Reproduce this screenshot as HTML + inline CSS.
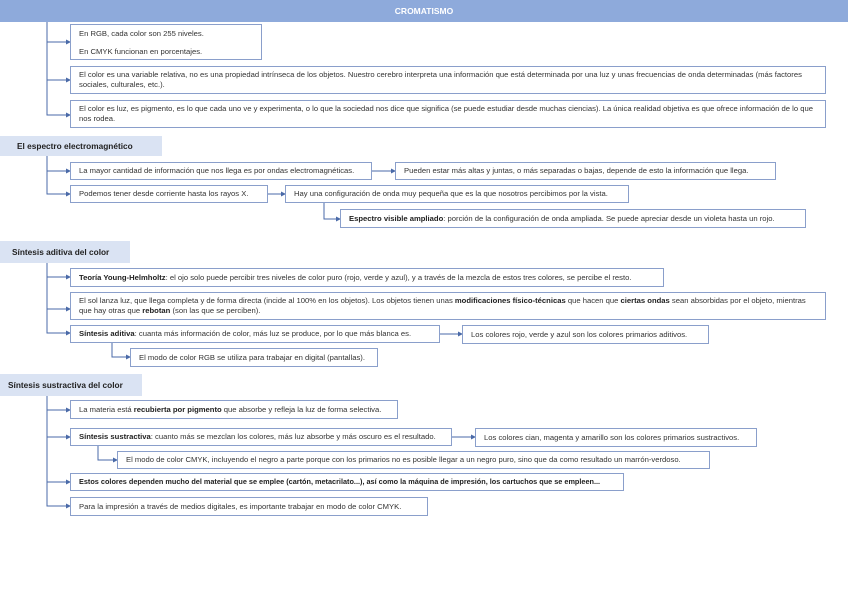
<!DOCTYPE html>
<html><head><meta charset="utf-8"><style>
body{margin:0;width:848px;height:599px;background:#fff;position:relative;overflow:hidden;font-family:"Liberation Sans",sans-serif;color:#333}
.hd{position:absolute;left:0;top:0;width:848px;height:22px;background:#8eaadb;color:#fff;font-weight:bold;font-size:8.5px;text-align:center;line-height:22px}
.b{position:absolute;border:1px solid #8a9fcb;box-sizing:border-box;font-size:7.65px;line-height:10px;padding:0 0 0 8px;background:#fff;letter-spacing:0;display:flex;align-items:center;white-space:nowrap}
.b.w{white-space:normal;padding-right:6px}
.l{position:absolute;left:0;background:#dae3f3;font-weight:bold;font-size:8.3px;color:#222;display:flex;align-items:center}
svg{position:absolute;left:0;top:0}
b{color:#222}
</style></head><body>
<div class="hd">CROMATISMO</div>
<svg width="848" height="599" stroke="#4a6aa8" fill="#4a6aa8" stroke-width="1">
<g fill="none">
<path d="M47 22V115H68M47 42H68M47 80H68"/>
<path d="M47 156V194H68M47 171H68M372 171H393M268 194H283M324 203V219H338"/>
<path d="M47 263V333H68M47 277H68M47 309H68M440 334H460M112 343V357H128"/>
<path d="M47 396V506H68M47 410H68M47 437H68M47 482H68M452 437H473M98 446V460H115"/>
</g>
<g stroke="none">
<path d="M66 39.5L71 42L66 44.5Z"/><path d="M66 77.5L71 80L66 82.5Z"/><path d="M66 112.5L71 115L66 117.5Z"/>
<path d="M66 168.5L71 171L66 173.5Z"/><path d="M66 191.5L71 194L66 196.5Z"/><path d="M391 168.5L396 171L391 173.5Z"/><path d="M281 191.5L286 194L281 196.5Z"/><path d="M336 216.5L341 219L336 221.5Z"/>
<path d="M66 274.5L71 277L66 279.5Z"/><path d="M66 306.5L71 309L66 311.5Z"/><path d="M66 330.5L71 333L66 335.5Z"/><path d="M458 331.5L463 334L458 336.5Z"/><path d="M126 354.5L131 357L126 359.5Z"/>
<path d="M66 407.5L71 410L66 412.5Z"/><path d="M66 434.5L71 437L66 439.5Z"/><path d="M66 479.5L71 482L66 484.5Z"/><path d="M66 503.5L71 506L66 508.5Z"/><path d="M471 434.5L476 437L471 439.5Z"/><path d="M113 457.5L118 460L113 462.5Z"/>
</g>
</svg>
<div class="b" style="left:70px;top:24px;width:192px;height:36px;display:block;padding-top:4px">En RGB, cada color son 255 niveles.<br><div style="margin-top:8px">En CMYK funcionan en porcentajes.</div></div>
<div class="b w" style="left:70px;top:66px;width:756px;height:28px">El color es una variable relativa, no es una propiedad intrínseca de los objetos. Nuestro cerebro interpreta una información que está determinada por una luz y unas frecuencias de onda determinadas (más factores sociales, culturales, etc.).</div>
<div class="b w" style="left:70px;top:100px;width:756px;height:28px">El color es luz, es pigmento, es lo que cada uno ve y experimenta, o lo que la sociedad nos dice que significa (se puede estudiar desde muchas ciencias). La única realidad objetiva es que ofrece información de lo que nos rodea.</div>

<div class="l" style="top:136px;width:162px;height:20px;padding-left:17px;box-sizing:border-box">El espectro electromagnético</div>
<div class="b" style="left:70px;top:162px;width:302px;height:18px">La mayor cantidad de información que nos llega es por ondas electromagnéticas.</div>
<div class="b" style="left:395px;top:162px;width:381px;height:18px">Pueden estar más altas y juntas, o más separadas o bajas, depende de esto la información que llega.</div>
<div class="b" style="left:70px;top:185px;width:198px;height:18px">Podemos tener desde corriente hasta los rayos X.</div>
<div class="b" style="left:285px;top:185px;width:344px;height:18px">Hay una configuración de onda muy pequeña que es la que nosotros percibimos por la vista.</div>
<div class="b" style="left:340px;top:209px;width:466px;height:19px"><b>Espectro visible ampliado</b>: porción de la configuración de onda ampliada. Se puede apreciar desde un violeta hasta un rojo.</div>

<div class="l" style="top:241px;width:130px;height:22px;padding-left:12px;box-sizing:border-box">Síntesis aditiva del color</div>
<div class="b" style="left:70px;top:268px;width:594px;height:19px"><b>Teoría Young-Helmholtz</b>: el ojo solo puede percibir tres niveles de color puro (rojo, verde y azul), y a través de la mezcla de estos tres colores, se percibe el resto.</div>
<div class="b w" style="left:70px;top:292px;width:756px;height:28px"><span>El sol lanza luz, que llega completa y de forma directa (incide al 100% en los objetos). Los objetos tienen unas <b>modificaciones físico-técnicas</b> que hacen que <b>ciertas ondas</b> sean absorbidas por el objeto, mientras que hay otras que <b>rebotan</b> (son las que se perciben).</span></div>
<div class="b" style="left:70px;top:325px;width:370px;height:18px"><b>Síntesis aditiva</b>: cuanta más información de color, más luz se produce, por lo que más blanca es.</div>
<div class="b" style="left:462px;top:325px;width:247px;height:19px">Los colores rojo, verde y azul son los colores primarios aditivos.</div>
<div class="b" style="left:130px;top:348px;width:248px;height:19px">El modo de color RGB se utiliza para trabajar en digital (pantallas).</div>

<div class="l" style="top:374px;width:142px;height:22px;padding-left:8px;box-sizing:border-box">Síntesis sustractiva del color</div>
<div class="b" style="left:70px;top:400px;width:328px;height:19px"><span>La materia está <b>recubierta por pigmento</b> que absorbe y refleja la luz de forma selectiva.</span></div>
<div class="b" style="left:70px;top:428px;width:382px;height:18px"><b>Síntesis sustractiva</b>: cuanto más se mezclan los colores, más luz absorbe y más oscuro es el resultado.</div>
<div class="b" style="left:475px;top:428px;width:282px;height:19px">Los colores cian, magenta y amarillo son los colores primarios sustractivos.</div>
<div class="b" style="left:117px;top:451px;width:593px;height:18px">El modo de color CMYK, incluyendo el negro a parte porque con los primarios no es posible llegar a un negro puro, sino que da como resultado un marrón-verdoso.</div>
<div class="b" style="left:70px;top:473px;width:554px;height:18px;font-weight:bold;color:#222;font-size:7.3px">Estos colores dependen mucho del material que se emplee (cartón, metacrilato...), así como la máquina de impresión, los cartuchos que se empleen...</div>
<div class="b" style="left:70px;top:497px;width:358px;height:19px">Para la impresión a través de medios digitales, es importante trabajar en modo de color CMYK.</div>
</body></html>
